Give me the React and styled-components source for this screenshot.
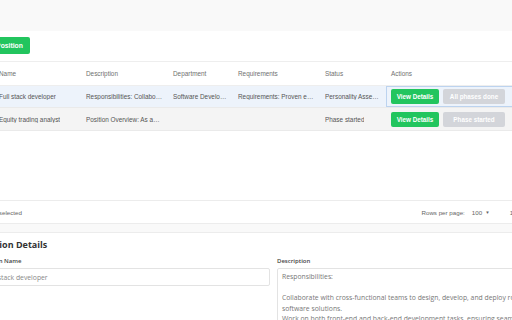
import styled, { createGlobalStyle } from 'styled-components';

const GlobalStyle = createGlobalStyle`
  *, *::before, *::after {
    box-sizing: border-box;
  }
  html, body {
    margin: 0;
    padding: 0;
    background: #f9f9f9;
    overflow: hidden;
  }
  body {
    font-family: "Liberation Sans", Arial, sans-serif;
  }
`;

const Page = styled.div`
  width: 620px;
  margin-left: -56px;
  padding-top: 31px;
  display: flex;
  flex-direction: column;
`;

const Panel = styled.section`
  background: #fff;
  display: flex;
  flex-direction: column;
`;

const Toolbar = styled.div`
  height: 31px;
  padding-left: 30px;
  padding-bottom: 1px;
  display: flex;
  align-items: center;
  border-bottom: 1px solid #eeeeee;
`;

const PrimaryButton = styled.button`
  height: 17px;
  padding: 0 7px;
  border: none;
  border-radius: 2px;
  background: #22c55e;
  color: #fff;
  font-family: "Liberation Sans", Arial, sans-serif;
  font-weight: 700;
  font-size: 6.8px;
`;

const Grid = styled.div`
  display: grid;
  grid-template-columns: 50px 87px 87px 65px 87px 66px 140px;
`;

const HeadRow = styled(Grid)`
  height: 24px;
  border-bottom: 1px solid #eeeeee;
`;

const Row = styled(Grid)`
  height: ${p => p.h}px;
  background: ${p => p.bg};
  border-bottom: 1px solid #eaeaea;
`;

const Cell = styled.div`
  padding: 0 5px;
  display: flex;
  align-items: center;
  min-width: 0;
  font-size: 6.4px;
  color: ${p => (p.head ? '#707070' : '#555')};
  box-shadow: ${p => (p.focus ? 'inset 0 0 0 1px #bcd3ef' : 'none')};
  gap: 4px;
`;

const Clip = styled.span`
  display: block;
  white-space: nowrap;
  overflow: hidden;
  text-overflow: ellipsis;
`;

const SmallButton = styled.button`
  height: 15px;
  width: ${p => p.w}px;
  padding: 0;
  border: none;
  border-radius: 2px;
  background: ${p => (p.muted ? '#d3d5da' : '#22c55e')};
  color: #fff;
  font-family: "Liberation Sans", Arial, sans-serif;
  font-weight: 700;
  font-size: 6.3px;
`;

const Empty = styled.div`
  height: 69px;
`;

const Footer = styled.div`
  height: 24px;
  border-top: 1px solid #ececec;
  border-bottom: 1px solid #ececec;
  display: flex;
  align-items: center;
  padding: 0 32px 0 38px;
  font-size: 6.2px;
  color: #666;
`;

const Pager = styled.div`
  margin-left: auto;
  display: flex;
  align-items: center;
  gap: 7px;
`;

const Caret = styled.span`
  font-size: 4.5px;
  margin-left: 3px;
  margin-right: 13px;
  vertical-align: 1px;
`;

const Details = styled.section`
  margin-top: 8px;
  background: #fff;
  border-top: 1px solid #ececec;
  padding: 5px 10px 0 35px;
  font-family: "Open Sans", sans-serif;
  height: 100px;
`;

const Title = styled.h2`
  margin: 0 0 5px -2px;
  font-size: 9px;
  font-weight: 700;
  color: #333;
  line-height: 14px;
`;

const FormGrid = styled.div`
  display: grid;
  grid-template-columns: 291px 1fr;
  column-gap: 7px;
`;

const Field = styled.div`
  display: flex;
  flex-direction: column;
  gap: 2px;
`;

const Label = styled.label`
  font-size: 6px;
  font-weight: 600;
  color: #444;
  line-height: 9px;
`;

const Input = styled.div`
  height: 18px;
  border: 1px solid #e3e3e3;
  border-radius: 2px;
  padding: 0 5px;
  display: flex;
  align-items: center;
  font-size: 6.8px;
  color: #888;
`;

const TextBox = styled.div`
  border: 1px solid #e3e3e3;
  border-radius: 2px;
  padding: 3px 4px;
  font-size: 6.8px;
  line-height: 10.5px;
  color: #777;
  white-space: pre-wrap;
  height: 80px;
`;

const rows = [
  {
    name: 'Full stack developer',
    desc: 'Responsibilities: Collaborate with cross-functional teams',
    dept: 'Software Development',
    req: 'Requirements: Proven experience',
    status: 'Personality Assessment',
    done: 'All phases done',
    bg: '#edf3fb',
    h: 22,
    focus: true,
  },
  {
    name: 'Equity trading analyst',
    desc: 'Position Overview: As an analyst',
    dept: '',
    req: '',
    status: 'Phase started',
    done: 'Phase started',
    bg: '#f4f4f4',
    h: 23,
    focus: false,
  },
];

const description = `Responsibilities:

Collaborate with cross-functional teams to design, develop, and deploy robust software solutions.
Work on both front-end and back-end development tasks, ensuring seamless integration.`;

const App = () => {
  return (
    <>
      <GlobalStyle />
      <Page>
        <Panel>
          <Toolbar>
            <PrimaryButton>Add Position</PrimaryButton>
          </Toolbar>
          <HeadRow>
            <Cell head />
            <Cell head>Name</Cell>
            <Cell head>Description</Cell>
            <Cell head>Department</Cell>
            <Cell head>Requirements</Cell>
            <Cell head>Status</Cell>
            <Cell head>Actions</Cell>
          </HeadRow>
          {rows.map(it => (
            <Row key={it.name} bg={it.bg} h={it.h}>
              <Cell />
              <Cell><Clip>{it.name}</Clip></Cell>
              <Cell><Clip>{it.desc}</Clip></Cell>
              <Cell><Clip>{it.dept}</Clip></Cell>
              <Cell><Clip>{it.req}</Clip></Cell>
              <Cell><Clip>{it.status}</Clip></Cell>
              <Cell focus={it.focus}>
                <SmallButton w={48}>View Details</SmallButton>
                <SmallButton w={62} muted>{it.done}</SmallButton>
              </Cell>
            </Row>
          ))}
          <Empty />
          <Footer>
            <span>1 row selected</span>
            <Pager>
              <span>Rows per page:</span>
              <span>100<Caret>▼</Caret></span>
              <span>1–2 of 2</span>
            </Pager>
          </Footer>
        </Panel>
        <Details>
          <Title>Position Details</Title>
          <FormGrid>
            <Field>
              <Label>Position Name</Label>
              <Input>Full stack developer</Input>
            </Field>
            <Field>
              <Label>Description</Label>
              <TextBox>{description}</TextBox>
            </Field>
          </FormGrid>
        </Details>
      </Page>
    </>
  );
};

export default App;
